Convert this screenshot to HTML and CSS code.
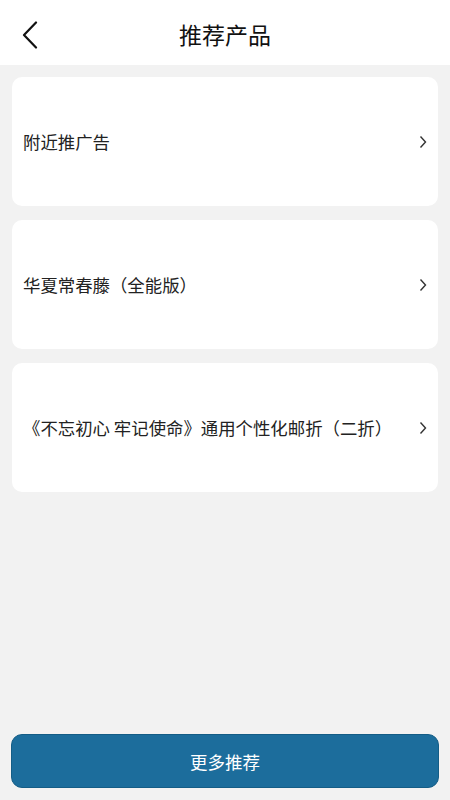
FILE: index.html
```html
<!DOCTYPE html>
<html lang="zh">
<head>
<meta charset="utf-8">
<link rel="stylesheet" href="styles.css">
</head>
<body>
<div class="page">
  <header class="header">
    <svg class="back" width="18" height="28" viewBox="0 0 18 28"><path d="M15 1.5 L3 14 L15 26.5" fill="none" stroke="#111" stroke-width="2.2" stroke-linecap="round" stroke-linejoin="round"/></svg>
    <h1 class="title">推荐产品</h1>
  </header>
  <main class="list">
    <div class="card"><span class="label">附近推广告</span><svg class="arrow" width="8" height="14" viewBox="0 0 8 14"><path d="M1.5 1.5 L6.5 7 L1.5 12.5" fill="none" stroke="#333" stroke-width="1.4"/></svg></div>
    <div class="card"><span class="label">华夏常春藤（全能版）</span><svg class="arrow" width="8" height="14" viewBox="0 0 8 14"><path d="M1.5 1.5 L6.5 7 L1.5 12.5" fill="none" stroke="#333" stroke-width="1.4"/></svg></div>
    <div class="card"><span class="label">《不忘初心 牢记使命》通用个性化邮折（二折）</span><svg class="arrow" width="8" height="14" viewBox="0 0 8 14"><path d="M1.5 1.5 L6.5 7 L1.5 12.5" fill="none" stroke="#333" stroke-width="1.4"/></svg></div>
  </main>
  <footer class="footer">
    <button class="more">更多推荐</button>
  </footer>
</div>
</body>
</html>
```
FILE: styles.css
```css
html, body {
  margin: 0;
  padding: 0;
}
body {
  background: #f2f2f2;
  font-family: "Noto Sans CJK SC", "Noto Sans", sans-serif;
  color: #222;
}
.page {
  width: 450px;
  height: 800px;
  display: flex;
  flex-direction: column;
}
.header {
  height: 65px;
  background: #fff;
  display: flex;
  align-items: center;
  justify-content: center;
  position: relative;
}
.back {
  position: absolute;
  left: 21px;
  top: 21px;
}
.title {
  margin: 0;
  font-size: 23px;
  font-weight: 400;
  color: #111;
  line-height: 1;
  padding-top: 3px;
}
.list {
  flex: 1;
  display: flex;
  flex-direction: column;
  gap: 14px;
  padding: 12px 12px 0 12px;
}
.card {
  height: 129px;
  background: #fff;
  border-radius: 10px;
  display: flex;
  align-items: center;
  justify-content: space-between;
  padding: 0 11px 0 11px;
  box-sizing: border-box;
}
.label {
  font-size: 17.4px;
  color: #222;
  line-height: 1;
}
.arrow {
  flex: none;
}
.footer {
  padding: 0 11px 12px 11px;
}
.more {
  width: 100%;
  height: 54px;
  border: 1px solid #145d86;
  border-radius: 11px;
  background: #1c6d9c;
  color: #fff;
  font-family: "Noto Sans CJK SC", "Noto Sans", sans-serif;
  font-size: 17.5px;
  display: block;
}
```
